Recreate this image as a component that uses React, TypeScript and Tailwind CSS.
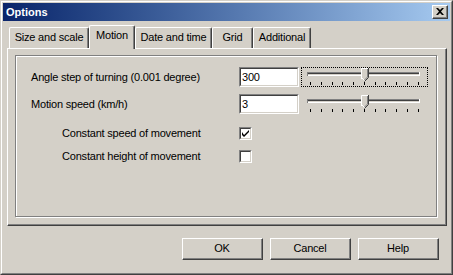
import React from 'react';

const font = { fontFamily: '"Liberation Sans", Arial, sans-serif' };

const Tab = ({ label, width, active }: { label: string; width: number; active?: boolean }) => (
  <div
    style={{ width }}
    className={
      active
        ? 'relative z-10 -mb-px flex h-[24px] items-start justify-center rounded-t-[2px] border-l border-t border-r border-l-white border-t-white border-r-[#404040] bg-[#d4d0c8] pt-[3px] shadow-[inset_-1px_0_0_#808080]'
        : 'flex h-[21px] items-start justify-center rounded-t-[2px] border-l border-t border-r border-l-white border-t-white border-r-[#404040] pt-[3px] shadow-[inset_-1px_0_0_#808080]'
    }
  >
    <span className="text-[11px] leading-[13px] tracking-[-0.2px] text-black">{label}</span>
  </div>
);

const Edit = ({ value }: { value: string }) => (
  <div className="h-[20px] w-[60px] border border-t-[#808080] border-l-[#808080] border-r-white border-b-white">
    <div className="flex h-full items-center border border-t-[#404040] border-l-[#404040] border-r-[#d4d0c8] border-b-[#d4d0c8] bg-white pl-[1px] text-[11px] text-black">
      {value}
    </div>
  </div>
);

const Slider = ({ focused }: { focused?: boolean }) => {
  const ticks = Array.from({ length: 11 }, (_, i) => 9 + Math.round(i * 10.75));
  return (
    <div
      className={
        focused
          ? 'ml-[2px] h-[20px] w-[127px] border border-dotted border-black'
          : 'ml-[2px] h-[20px] w-[127px] border border-transparent'
      }
    >
      <svg width="125" height="18" viewBox="0 0 125 18" className="block">
        <rect x="5" y="4" width="113" height="1" fill="#808080" />
        <rect x="5" y="5" width="113" height="1" fill="#404040" />
        <rect x="5" y="6" width="113" height="1" fill="#d4d0c8" />
        <rect x="5" y="7" width="113" height="1" fill="#ffffff" />
        <rect x="5" y="4" width="1" height="4" fill="#808080" />
        <rect x="117" y="4" width="1" height="4" fill="#ffffff" />
        {ticks.map((t) => (
          <rect key={t} x={t - 1} y="14" width="1" height="3" fill="#000000" />
        ))}
        <path d="M59 0.5 H66 V9 L62.5 12.5 L59 9 Z" fill="#d4d0c8" />
        <path d="M59.5 11 V0.5 H66" fill="none" stroke="#ffffff" />
        <path d="M66.5 0 V9.5 L62.5 13.5" fill="none" stroke="#404040" />
        <path d="M65.5 1 V9 L62.5 12" fill="none" stroke="#808080" />
        <path d="M59.5 9.5 L62.5 12.5" fill="none" stroke="#ffffff" />
      </svg>
    </div>
  );
};

const Check = ({ checked }: { checked?: boolean }) => (
  <div className="h-[13px] w-[13px] border border-t-[#808080] border-l-[#808080] border-r-white border-b-white">
    <div className="flex h-full w-full items-center justify-center border border-t-[#404040] border-l-[#404040] border-r-[#d4d0c8] border-b-[#d4d0c8] bg-white">
      {checked && (
        <svg width="7" height="7" viewBox="0 0 7 7" className="block">
          <path d="M0 2 V5 L2 7 L7 2 V0 L2 5 Z" fill="#000000" />
        </svg>
      )}
    </div>
  </div>
);

const Button = ({ label }: { label: string }) => (
  <div className="h-[22px] w-[81px] border border-t-white border-l-white border-r-[#404040] border-b-[#404040]">
    <div className="flex h-full items-center justify-center border-r border-b border-r-[#808080] border-b-[#808080] text-[11px] tracking-[-0.2px] text-black">
      {label}
    </div>
  </div>
);

export default function App() {
  return (
    <div style={font} className="h-[275px] w-[453px] overflow-hidden bg-[#d4d0c8]">
      <div className="h-full w-full border border-t-[#d4d0c8] border-l-[#d4d0c8] border-r-[#404040] border-b-[#404040]">
        <div className="h-full w-full border border-t-white border-l-white border-r-[#808080] border-b-[#808080] p-px">
          {/* Title bar */}
          <div className="flex h-[18px] items-center justify-between bg-gradient-to-r from-[#0a246a] to-[#a6caf0] pl-[3px] pr-[2px]">
            <span className="text-[11px] font-bold text-white">Options</span>
            <div className="h-[14px] w-[16px] border border-t-white border-l-white border-r-[#404040] border-b-[#404040] bg-[#d4d0c8]">
              <div className="flex h-full items-center justify-center border-r border-b border-r-[#808080] border-b-[#808080]">
                <svg width="8" height="7" viewBox="0 0 8 7" className="block">
                  <path d="M0 0 H2 L4 2 L6 0 H8 L5 3.5 L8 7 H6 L4 5 L2 7 H0 L3 3.5 Z" fill="#000000" />
                </svg>
              </div>
            </div>
          </div>

          {/* Tabs */}
          <div className="ml-[4px] mt-[4px] w-[440px]">
            <div className="flex h-[23px] items-end pl-[2px]">
              <Tab label="Size and scale" width={80} />
              <Tab label="Motion" width={46} active />
              <Tab label="Date and time" width={77} />
              <Tab label="Grid" width={41} />
              <Tab label="Additional" width={58} />
            </div>
            <div className="h-[178px] border border-t-white border-l-white border-r-[#404040] border-b-[#404040] pl-[7px] pt-[6px] shadow-[inset_-1px_-1px_0_#808080]">
              <div className="h-[162px] w-[422px] border border-[#808080] pl-[15px] pt-[11px] text-[11px] tracking-[-0.2px] text-black shadow-[inset_1px_1px_0_#ffffff,1px_1px_0_#ffffff]">
                <div className="flex h-[20px] items-center">
                  <span className="w-[208px]">Angle step of turning (0.001 degree)</span>
                  <Edit value="300" />
                  <Slider focused />
                </div>
                <div className="mt-[7px] flex h-[20px] items-center">
                  <span className="w-[208px]">Motion speed (km/h)</span>
                  <Edit value="3" />
                  <Slider />
                </div>
                <div className="mt-[13px] flex h-[13px] items-center">
                  <span className="w-[208px] pl-[31px]">Constant speed of movement</span>
                  <Check checked />
                </div>
                <div className="mt-[10px] flex h-[13px] items-center">
                  <span className="w-[208px] pl-[31px]">Constant height of movement</span>
                  <Check />
                </div>
              </div>
            </div>
          </div>

          {/* Buttons */}
          <div className="mt-[12px] flex justify-end gap-[7px] pr-[11px]">
            <Button label="OK" />
            <Button label="Cancel" />
            <Button label="Help" />
          </div>
        </div>
      </div>
    </div>
  );
}
